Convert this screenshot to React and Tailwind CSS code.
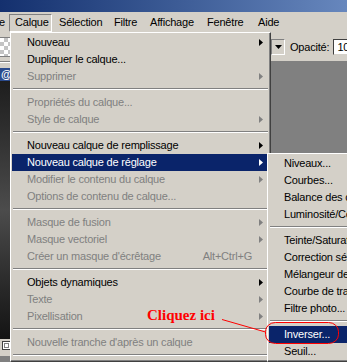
import clsx from 'clsx';

const mainItems = [
    { label: 'Nouveau', arrow: true },
    { label: 'Dupliquer le calque...' },
    { label: 'Supprimer', state: 'disabled', arrow: true },
    { sep: true },
    { label: 'Propriétés du calque...', state: 'disabled' },
    { label: 'Style de calque', state: 'disabled', arrow: true },
    { sep: true },
    { label: 'Nouveau calque de remplissage', arrow: true },
    { label: 'Nouveau calque de réglage', state: 'active', arrow: true },
    { label: 'Modifier le contenu du calque', state: 'disabled', arrow: true },
    { label: 'Options de contenu de calque...', state: 'disabled' },
    { sep: true },
    { label: 'Masque de fusion', state: 'disabled', arrow: true },
    { label: 'Masque vectoriel', state: 'disabled', arrow: true },
    { label: "Créer un masque d'écrêtage", state: 'disabled', shortcut: 'Alt+Ctrl+G' },
    { sep: true },
    { label: 'Objets dynamiques', arrow: true },
    { label: 'Texte', state: 'disabled', arrow: true },
    { label: 'Pixellisation', state: 'disabled', arrow: true },
    { sep: true },
    { label: "Nouvelle tranche d'après un calque", state: 'disabled' },
    { sep: true },
];

const subItems = [
    { label: 'Niveaux...' },
    { label: 'Courbes...' },
    { label: 'Balance des couleurs...' },
    { label: 'Luminosité/Contraste...' },
    { sep: true },
    { label: 'Teinte/Saturation...' },
    { label: 'Correction sélective...' },
    { label: 'Mélangeur de couches...' },
    { label: 'Courbe de transfert de dégradé...' },
    { label: 'Filtre photo...' },
    { sep: true },
    { label: 'Inverser...', state: 'active' },
    { label: 'Seuil...' },
];

function Arrow({ state }) {
    const fill = state === 'active' ? '#ffffff' : state === 'disabled' ? '#808080' : '#000000';
    return (
        <svg width="4" height="7" viewBox="0 0 4 7" className="shrink-0">
            <polygon points="0,0 4,3.5 0,7" fill={fill} />
        </svg>
    );
}

function MenuRow({ item }) {
    if (item.sep) {
        return (
            <div className="h-[9px] pt-[3px] px-[1px]">
                <div className="h-px bg-[#808080]" />
                <div className="h-px bg-white" />
            </div>
        );
    }
    const active = item.state === 'active';
    const disabled = item.state === 'disabled';
    return (
        <div
            className={clsx(
                'flex h-[17px] items-center pl-[15px] pr-[6px] whitespace-nowrap',
                active && 'bg-[#0a246a] text-white',
                disabled && 'text-[#808080]'
            )}
        >
            <span className="flex-1">{item.label}</span>
            {item.shortcut && <span className="mr-[11px]">{item.shortcut}</span>}
            {item.arrow && <Arrow state={item.state} />}
        </div>
    );
}

function Menu({ items, className }) {
    return (
        <div
            className={clsx(
                'absolute bg-[#d4d0c8] border-t border-l border-white border-r border-b border-r-[#404040] border-b-[#404040] p-[1px] shadow-[inset_-1px_-1px_0_#808080]',
                className
            )}
        >
            {items.map((item, i) => (
                <MenuRow key={i} item={item} />
            ))}
        </div>
    );
}

export default function App() {
    const menus = [
        { label: 'Sélection', w: 'w-[55px]' },
        { label: 'Filtre', w: 'w-[36px]' },
        { label: 'Affichage', w: 'w-[57px]' },
        { label: 'Fenêtre', w: 'w-[51px]' },
        { label: 'Aide', w: 'w-[40px]' },
    ];

    return (
        <div className="relative w-[347px] h-[362px] overflow-hidden bg-[#d4d0c8] flex flex-col font-['Liberation_Sans',Arial,sans-serif] text-[11px] tracking-[-0.2px] text-black">
            {/* title bar */}
            <div className="h-[12px] shrink-0 bg-linear-to-r from-[#14306e] to-[#6787bd]" />

            {/* menu bar */}
            <div className="h-[21px] shrink-0 flex items-center">
                <div className="w-[10px] shrink-0 -ml-[1px]">e</div>
                <div className="w-[43px] h-[18px] shrink-0 flex items-center pl-[5px] border border-t-[#808080] border-l-[#808080] border-r-white border-b-white">
                    Calque
                </div>
                {menus.map(m => (
                    <div key={m.label} className={clsx(m.w, 'shrink-0 pl-[7px] whitespace-nowrap')}>
                        {m.label}
                    </div>
                ))}
            </div>

            {/* options bar */}
            <div className="h-[29px] shrink-0 flex items-center border-b border-[#808080]">
                <div className="w-[10px] h-[20px] shrink-0 border-y border-[#808080] bg-[repeating-conic-gradient(#c4c4c4_0_25%,#ffffff_0_50%)] bg-[length:8px_8px]" />
                <div className="ml-[261px] w-[14px] h-[16px] shrink-0 flex items-center justify-center border border-t-[#808080] border-l-[#808080] border-r-white border-b-white bg-[#d4d0c8]">
                    <svg width="7" height="4" viewBox="0 0 7 4">
                        <polygon points="0,0 7,0 3.5,4" fill="#000" />
                    </svg>
                </div>
                <span className="ml-[5px] shrink-0 whitespace-nowrap">Opacité:</span>
                <div className="ml-[4px] w-[40px] h-[16px] shrink-0 bg-white border border-t-[#404040] border-l-[#404040] border-r-[#d4d0c8] border-b-[#d4d0c8] pl-[3px] leading-[14px] whitespace-nowrap">
                    100%
                </div>
            </div>

            {/* workspace */}
            <div className="flex-1 bg-[#808080] flex">
                <div className="w-[150px] flex flex-col bg-[#d4d0c8] pt-[5px] pb-[4px] border-t border-white self-stretch mb-[6px]">
                    <div className="h-[13px] shrink-0 bg-[#2a4a8c] text-white font-bold leading-[13px] pl-[1px] whitespace-nowrap">
                        @
                    </div>
                    <div className="flex-1 bg-linear-to-b from-[#1e1e1e] via-[#4c4c4c] to-[#141414]" />
                    <div className="h-[13px] shrink-0 flex items-center pl-[2px]">
                        <svg width="9" height="9" viewBox="0 0 9 9">
                            <rect x="0.5" y="0.5" width="8" height="8" fill="#fff" stroke="#404040" />
                            <rect x="2.5" y="2.5" width="4" height="4" fill="none" stroke="#808080" />
                        </svg>
                    </div>
                </div>
            </div>

            {/* menus */}
            <Menu items={mainItems} className="left-[10px] top-[32px] w-[261px]" />
            <Menu items={subItems} className="left-[267px] top-[153px] w-[200px]" />

            {/* annotation */}
            <svg
                className="absolute left-0 top-0 pointer-events-none"
                width="347"
                height="362"
                viewBox="0 0 347 362"
            >
                <line x1="222" y1="319.5" x2="265.5" y2="332" stroke="#ff0000" strokeWidth="1" />
                <rect x="265.5" y="322.5" width="73" height="21" rx="10" ry="9" fill="none" stroke="#ff0000" strokeWidth="1" />
            </svg>
            <span className="absolute left-[147px] top-[308px] text-[15px] leading-[15px] tracking-normal font-bold text-[#ff0000] font-['Liberation_Serif','Times_New_Roman',serif] whitespace-nowrap">
                Cliquez ici
            </span>
        </div>
    );
}
